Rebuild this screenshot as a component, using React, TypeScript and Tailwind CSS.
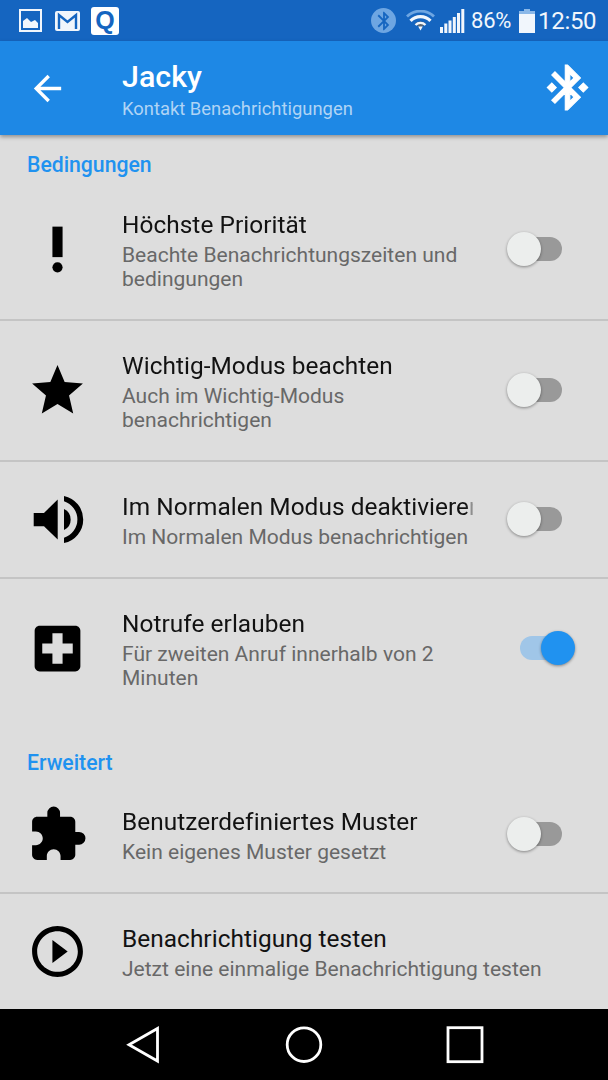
import type { ReactNode } from 'react'
import { clsx } from 'clsx'
import {
  MdArrowBack,
  MdBluetooth,
  MdExtension,
  MdLocalHospital,
  MdPlayCircleOutline,
  MdPriorityHigh,
  MdStar,
} from 'react-icons/md'

function VolumeIcon() {
  return (
    <svg width="61" height="61" viewBox="0 0 61 61" fill="currentColor">
      <path d="M6.7 23.9H17L30.7 10.5v40L17 37.2H6.7z" />
      <path d="M37 6.9a24.1 24.1 0 0 1 0 47.2v-5.3a19.2 19.2 0 0 0 0-36.6z" />
      <path d="M37 20a11.6 11.6 0 0 1 0 21z" />
    </svg>
  )
}

function BluetoothIcon() {
  return (
    <svg width="54" height="54" viewBox="0.2 0.2 24 24" fill="currentColor" stroke="currentColor" strokeWidth="0.5">
      <path d="M7 12l-2-2-2 2 2 2 2-2zm10.71-4.29L12 2h-1v7.59L6.41 5 5 6.41 10.59 12 5 17.59 6.41 19 11 14.41V22h1l5.71-5.71-4.3-4.29 4.3-4.29zM13 5.83l1.88 1.88L13 9.59V5.83zm1.88 10.46L13 18.17v-3.76l1.88 1.88zM19 10l-2 2 2 2 2-2-2-2z" />
    </svg>
  )
}

function StatusBar() {
  return (
    <div className="flex h-[41px] shrink-0 items-center justify-between bg-[#1565c0] pr-[11px] pl-[19px] text-[#f1f6fc]">
      <div className="flex items-center">
        <svg width="23" height="23" viewBox="0 0 23 23">
          <rect x="1" y="1" width="21" height="21" fill="none" stroke="currentColor" strokeWidth="2" />
          <path d="M4 19v-7l4-3 4 4 4-2 3 3v5z" fill="currentColor" />
        </svg>
        <svg className="ml-[13px]" width="25" height="20" viewBox="0 0 25 20">
          <rect width="25" height="20" rx="2" fill="currentColor" />
          <path d="M4 18V4l8.5 7L21 4v14" fill="none" stroke="#1565c0" strokeWidth="2.4" />
        </svg>
        <div className="ml-[11px] flex h-7 w-7 items-center justify-center rounded-[3px] bg-white pb-px font-['Liberation_Sans',sans-serif] text-[25px] leading-6 font-bold text-[#1565c0]">
          Q
        </div>
      </div>
      <div className="flex items-center">
        <div className="flex h-[25px] w-[25px] items-center justify-center rounded-full bg-[#6ea6e2] text-[#1565c0]">
          <MdBluetooth size={22} />
        </div>
        <svg className="ml-[10px]" width="29" height="21" viewBox="0 0 29 21" fill="none">
          <path d="M1 6.5a19.5 19.5 0 0 1 27 0" stroke="#6ea6e2" strokeWidth="2.8" />
          <path d="M4.5 10.8a14 14 0 0 1 20 0" stroke="currentColor" strokeWidth="3.2" />
          <path d="M9 13.5a9 9 0 0 1 11 0l-5.5 4z" fill="#59646f" />
          <path d="M9.5 15a7 7 0 0 1 10 0" stroke="currentColor" strokeWidth="2.2" />
          <path d="M12.2 16.6h4.6l-2.3 3.9z" fill="currentColor" />
        </svg>
        <svg className="ml-[5px]" width="25" height="24" viewBox="0 0 25 24" fill="currentColor">
          <path d="M0 18h3v6H0zM4.3 14.5h3V24h-3zM8.5 11.5h3V24h-3zM12.8 8h3v16h-3zM17 4h3v20h-3zM21.3 0h3v24h-3z" />
        </svg>
        <span className="ml-[6px] w-10 pt-px text-[22px] leading-6 tracking-[-0.2px]">86%</span>
        <svg className="ml-[8px]" width="16" height="24" viewBox="0 0 16 24">
          <path d="M5 0h6v2h5v3H0V2h5z" fill="#8bb8e8" />
          <path d="M0 5h16v19H0z" fill="currentColor" />
        </svg>
        <span className="ml-[3px] w-[59px] pt-px text-[24px] leading-6 tracking-[-0.3px]">12:50</span>
      </div>
    </div>
  )
}

function AppBar() {
  return (
    <header className="z-10 flex h-[94px] shrink-0 items-center bg-[#1e88e5] pr-[13px] pl-[27px] text-white shadow-[0_2px_4px_rgba(0,0,0,0.35)]">
      <MdArrowBack size={41} />
      <div className="ml-[54px] flex-1 pt-[5px]">
        <h1 className="text-[30.4px] leading-9 font-medium">Jacky</h1>
        <p className="mt-[1.5px] text-[18.4px] leading-[26px] text-[#b0d4f5]">Kontakt Benachrichtigungen</p>
      </div>
      <BluetoothIcon />
    </header>
  )
}

function Toggle({ on }: { on: boolean }) {
  return (
    <div className="relative flex h-[34px] w-[68px] items-center justify-center" role="switch" aria-checked={on}>
      <div className={clsx('h-6 w-[42px] rounded-full', on ? 'bg-[#a0c6e8]' : 'bg-[#999999]')} />
      <div
        className={clsx(
          'absolute top-0 h-[34px] w-[34px] rounded-full shadow-[0_1px_3px_rgba(0,0,0,0.4)]',
          on ? 'right-0 bg-[#2092f0]' : 'left-0 bg-[#eceeed]',
        )}
      />
    </div>
  )
}

interface RowProps {
  icon: ReactNode
  title: string
  text: string
  on?: boolean
  tall?: boolean
  last?: boolean
}

function Row({ icon, title, text, on, tall, last }: RowProps) {
  const hasToggle = on !== undefined
  return (
    <div
      className={clsx(
        'flex shrink-0 items-center border-b-2 pr-[33px] pb-px pl-[27px]',
        tall ? 'h-[141px]' : 'h-[117px]',
        last ? 'border-transparent' : 'border-[#c4c4c4]',
      )}
    >
      <div className="w-[95px] shrink-0 text-black">{icon}</div>
      <div className={clsx('shrink-0 pt-[3px]', hasToggle ? 'w-[351px]' : 'w-[440px]')}>
        <div
          className={clsx(
            'overflow-hidden text-[24.4px] leading-[29px] tracking-[0.05px] whitespace-nowrap text-[#121212]',
            hasToggle && '[mask-image:linear-gradient(to_right,#000_344px,transparent_353px)]',
          )}
        >
          {title}
        </div>
        <div className="mt-[4px] text-[21.02px] leading-6 text-[#686868]">{text}</div>
      </div>
      {hasToggle && (
        <div className="ml-auto">
          <Toggle on={on} />
        </div>
      )}
    </div>
  )
}

function SectionTitle({ children }: { children: ReactNode }) {
  return <h2 className="pl-[27px] text-[21.2px] leading-[26px] font-medium text-[#2092f0]">{children}</h2>
}

function NavBar() {
  return (
    <nav className="flex h-[71px] shrink-0 items-center justify-center gap-[123px] bg-black text-white">
      <svg width="38" height="38" viewBox="0 0 38 38" fill="none" stroke="currentColor" strokeWidth="2.8">
        <path d="M33.5 2.5v32.5L5 18.7z" />
      </svg>
      <svg width="38" height="38" viewBox="0 0 38 38" fill="none" stroke="currentColor" strokeWidth="2.8">
        <circle cx="19" cy="18.7" r="16.8" />
      </svg>
      <svg width="38" height="38" viewBox="0 0 38 38" fill="none" stroke="currentColor" strokeWidth="2.8">
        <rect x="2" y="1.7" width="34" height="34" />
      </svg>
    </nav>
  )
}

export default function App() {
  return (
    <div className="flex h-[1080px] w-[608px] flex-col overflow-hidden bg-[#dddddd] font-['Roboto',sans-serif]">
      <StatusBar />
      <AppBar />
      <main className="flex flex-1 flex-col overflow-hidden">
        <div className="pt-[17px] pb-[2px]">
          <SectionTitle>Bedingungen</SectionTitle>
        </div>
        <Row
          icon={<MdPriorityHigh size={61} />}
          title="Höchste Priorität"
          text="Beachte Benachrichtungszeiten und bedingungen"
          on={false}
          tall
        />
        <Row
          icon={<MdStar size={61} />}
          title="Wichtig-Modus beachten"
          text="Auch im Wichtig-Modus benachrichtigen"
          on={false}
          tall
        />
        <Row
          icon={<VolumeIcon />}
          title="Im Normalen Modus deaktivieren"
          text="Im Normalen Modus benachrichtigen"
          on={false}
        />
        <Row
          icon={<MdLocalHospital size={61} />}
          title="Notrufe erlauben"
          text="Für zweiten Anruf innerhalb von 2 Minuten"
          on={true}
          tall
          last
        />
        <div className="pt-[30px] pb-px">
          <SectionTitle>Erweitert</SectionTitle>
        </div>
        <Row
          icon={<MdExtension size={61} />}
          title="Benutzerdefiniertes Muster"
          text="Kein eigenes Muster gesetzt"
          on={false}
        />
        <Row
          icon={<MdPlayCircleOutline size={61} />}
          title="Benachrichtigung testen"
          text="Jetzt eine einmalige Benachrichtigung testen"
          last
        />
      </main>
      <NavBar />
    </div>
  )
}
